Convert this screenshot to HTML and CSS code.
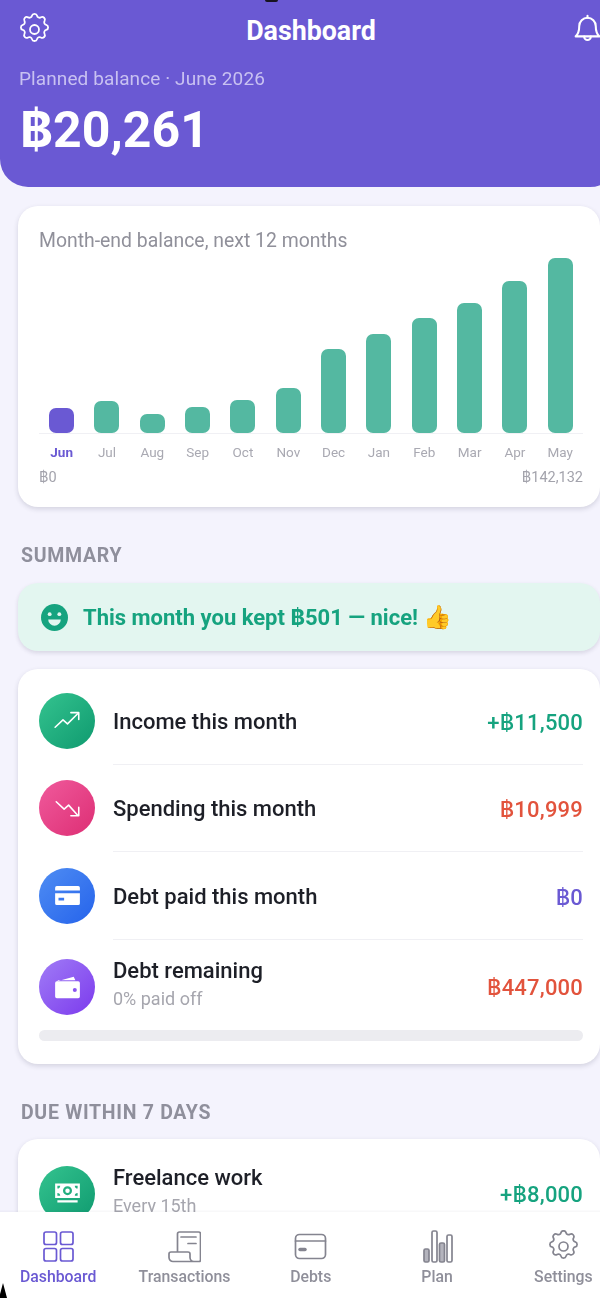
FILE: index.html
```html
<!DOCTYPE html>
<html lang="en">
<head>
<meta charset="utf-8">
<title>Dashboard</title>
<link rel="stylesheet" href="styles.css">
</head>
<body>
<div class="app">
  <span class="cam"></span>
  <header class="hero">
    <div class="topbar">
      <svg class="top-icon gear-icon" viewBox="1 1 22 22"><use href="#gear"/></svg>
      <h1 class="title">Dashboard</h1>
      <svg class="top-icon" viewBox="0 0 24 24"><path d="M6 9.5a6 6 0 0 1 12 0c0 5 1.6 6.6 2.6 7.5H3.4C4.400 16.100 6 14.500 6 9.500Z"/><path d="M9.600 17.200a2.400 2.400 0 0 0 4.800 0"/><path d="M12 2v1.500"/></svg>
    </div>
    <p class="hero-label">Planned balance · June 2026</p>
    <p class="hero-value">฿20,261</p>
  </header>

  <main class="content">
    <section class="card chart-card">
      <p class="chart-title">Month-end balance, next 12 months</p>
      <div class="bars">
        <div class="bar-col"><i class="bar bar-now" style="height:25px"></i></div>
        <div class="bar-col"><i class="bar" style="height:32px"></i></div>
        <div class="bar-col"><i class="bar" style="height:19px"></i></div>
        <div class="bar-col"><i class="bar" style="height:26px"></i></div>
        <div class="bar-col"><i class="bar" style="height:33px"></i></div>
        <div class="bar-col"><i class="bar" style="height:45px"></i></div>
        <div class="bar-col"><i class="bar" style="height:84px"></i></div>
        <div class="bar-col"><i class="bar" style="height:99px"></i></div>
        <div class="bar-col"><i class="bar" style="height:115px"></i></div>
        <div class="bar-col"><i class="bar" style="height:130px"></i></div>
        <div class="bar-col"><i class="bar" style="height:152px"></i></div>
        <div class="bar-col"><i class="bar" style="height:175px"></i></div>
      </div>
      <div class="months">
        <span class="month-now">Jun</span><span>Jul</span><span>Aug</span><span>Sep</span><span>Oct</span><span>Nov</span><span>Dec</span><span>Jan</span><span>Feb</span><span>Mar</span><span>Apr</span><span>May</span>
      </div>
      <div class="scale"><span>฿0</span><span>฿142,132</span></div>
    </section>

    <h2 class="section-label">SUMMARY</h2>

    <div class="banner">
      <svg class="smile" viewBox="0 0 28 28"><circle cx="14" cy="14" r="14" fill="#16a37f"/><circle cx="9" cy="10.500" r="2" fill="#e3f6f0"/><circle cx="19" cy="10.500" r="2" fill="#e3f6f0"/><path d="M7.500 16h13a6.500 6.500 0 0 1-13 0Z" fill="#e3f6f0"/></svg>
      <span class="banner-text">This month you kept ฿501 — nice! <span class="emoji">👍</span></span>
    </div>

    <section class="card list-card">
      <div class="row">
        <span class="badge badge-green"><svg viewBox="0 0 24 24"><path d="M1 18l7-6.500 4 3.500 9-9"/><path d="M15 5h7v6"/></svg></span>
        <div class="row-body"><div class="row-text"><span class="row-name">Income this month</span></div><span class="amount green">+฿11,500</span></div>
      </div>
      <div class="row">
        <span class="badge badge-pink"><svg viewBox="0 0 24 24"><path d="M2 6l7 6.500 4-3.500 8 9"/><path d="M22 11v7.500h-7"/></svg></span>
        <div class="row-body"><div class="row-text"><span class="row-name">Spending this month</span></div><span class="amount red">฿10,999</span></div>
      </div>
      <div class="row">
        <span class="badge badge-blue"><svg viewBox="0 0 24 24"><path class="solid" fill-rule="evenodd" d="M2.500 3.500h19a1.500 1.500 0 0 1 1.500 1.500v2.500H1V5a1.500 1.500 0 0 1 1.500-1.500ZM1 10h22v9a1.500 1.500 0 0 1-1.500 1.500h-19A1.500 1.500 0 0 1 1 19Zm3 4v2.500h5V14Z"/></svg></span>
        <div class="row-body"><div class="row-text"><span class="row-name">Debt paid this month</span></div><span class="amount purple">฿0</span></div>
      </div>
      <div class="row row-debt">
        <span class="badge badge-violet"><svg viewBox="0 0 24 24"><path class="solid" fill-rule="evenodd" d="M3 6.500 17.500 2.500 19 5.500H3.500ZM2.500 6.500h19A1.500 1.500 0 0 1 23 8v12a1.500 1.500 0 0 1-1.500 1.500h-19A1.500 1.500 0 0 1 1 20V8a1.500 1.500 0 0 1 1.500-1.500ZM18.500 12.500a1.800 1.800 0 1 0 0 3.600 1.800 1.800 0 0 0 0-3.600Z"/></svg></span>
        <div class="row-body row-last"><div class="row-text row-text-two"><span class="row-name">Debt remaining</span><span class="row-sub">0% paid off</span></div><span class="amount red">฿447,000</span></div>
      </div>
      <div class="track"></div>
    </section>

    <h2 class="section-label">DUE WITHIN 7 DAYS</h2>

    <section class="card list-card due-card">
      <div class="row row-due">
        <span class="badge badge-green"><svg viewBox="0 0 24 24"><path class="solid" fill-rule="evenodd" d="M1 3h22v13H1ZM12 5.500a4 4 0 1 0 0 8 4 4 0 0 0 0-8ZM12 7.500a2 2 0 1 1 0 4 2 2 0 0 1 0-4ZM3 5v2.500A2.500 2.500 0 0 0 5.500 5ZM18.500 5A2.500 2.500 0 0 0 21 7.500V5ZM3 14h2.500A2.500 2.500 0 0 0 3 11.500ZM21 14v-2.500A2.500 2.500 0 0 0 18.500 14ZM3 18h18v2H3Z"/></svg></span>
        <div class="row-body row-last"><div class="row-text row-text-two"><span class="row-name">Freelance work</span><span class="row-sub">Every 15th</span></div><span class="amount green">+฿8,000</span></div>
      </div>
    </section>
  </main>

  <nav class="nav">
    <a class="nav-item nav-active">
      <svg viewBox="0 0 33 33"><rect x="2" y="2" width="12.500" height="12.500" rx="2"/><rect x="18.500" y="2" width="12.500" height="12.500" rx="2"/><rect x="2" y="18.500" width="12.500" height="12.500" rx="2"/><rect x="18.500" y="18.500" width="12.500" height="12.500" rx="2"/></svg>
      <span>Dashboard</span>
    </a>
    <a class="nav-item">
      <svg viewBox="0 0 33 33"><path d="M9.500 22V4a2 2 0 0 1 2-2h19a2 2 0 0 1 2 2v26a1.500 1.500 0 0 1-1.500 1.500H5a4 4 0 0 1-4-4V24a2 2 0 0 1 2-2h17a2 2 0 0 1 2 2v3.500a4 4 0 0 0 4 4"/><path d="M13 7h15M20 13.500h8"/></svg>
      <span>Transactions</span>
    </a>
    <a class="nav-item">
      <svg viewBox="0 0 33 33"><rect x="1.500" y="4.500" width="30" height="24" rx="4"/><path d="M1.500 11h30"/><path class="fat" d="M6 19.500h5"/></svg>
      <span>Debts</span>
    </a>
    <a class="nav-item">
      <svg viewBox="0 0 33 33"><rect class="bar-fill" x="3" y="19" width="5" height="13" rx="1.500"/><rect x="11" y="1" width="5" height="31" rx="1.500"/><rect class="bar-fill" x="18.500" y="13" width="5" height="19" rx="1.500"/><rect x="26" y="5" width="5" height="27" rx="1.500"/></svg>
      <span>Plan</span>
    </a>
    <a class="nav-item">
      <svg class="gear-icon" viewBox="1 1 22 22"><use href="#gear"/></svg>
      <span>Settings</span>
    </a>
  </nav>
  <span class="corner"></span>
</div>

<svg class="defs" width="0" height="0">
  <defs>
    <g id="gear">
      <path d="M10.300 2.800c.4-1.700 3-1.700 3.400 0a1.750 1.750 0 0 0 2.600 1.100c1.500-.9 3.300.8 2.400 2.400a1.750 1.750 0 0 0 1.100 2.600c1.700.4 1.700 3 0 3.400a1.750 1.750 0 0 0-1.100 2.600c.9 1.500-.8 3.300-2.400 2.400a1.750 1.750 0 0 0-2.600 1.100c-.4 1.700-3 1.700-3.400 0a1.750 1.750 0 0 0-2.600-1.100c-1.500.9-3.300-.8-2.400-2.400a1.750 1.750 0 0 0-1.100-2.600c-1.700-.4-1.700-3 0-3.400a1.750 1.750 0 0 0 1.100-2.600c-.9-1.500.8-3.300 2.400-2.400a1.750 1.750 0 0 0 2.600-1.100Z"/>
      <circle cx="12" cy="12" r="3"/>
    </g>
  </defs>
</svg>
</body>
</html>
```

FILE: styles.css
```css
* { box-sizing: border-box; }
html, body { margin: 0; height: 100%; overflow: hidden; background: #f4f3fd; }
body { font-family: Roboto, Inter, "Noto Sans", sans-serif; }
.app { position: relative; width: 600px; height: 1298px; overflow: hidden; filter: blur(.45px); }
.defs { position: absolute; }
.cam { position: absolute; left: 265px; top: 0; width: 13px; height: 2px; background: #17131f; border-radius: 0 0 4px 4px; z-index: 3; }
.corner { position: absolute; left: -1px; bottom: 0; width: 0; height: 0; border-left: 4px solid transparent; border-right: 4px solid transparent; border-bottom: 15px solid #000; z-index: 3; }

.hero { width: 618px; height: 187px; background: #6a59d3; border-radius: 0 0 28px 28px; padding: 10px 14px 0 18px; color: #fff; }
.topbar { display: flex; align-items: center; justify-content: space-between; height: 38px; }
.top-icon { width: 33px; height: 33px; fill: none; stroke: #fff; stroke-width: 1.500; stroke-linecap: round; stroke-linejoin: round; overflow: visible; }
.top-icon.gear-icon { stroke-width: 1.200; }
.title { margin: 0; padding-top: 4px; font-size: 26.800px; font-weight: 700; line-height: 38px; }
.hero-label { margin: 19px 0 0 1px; font-size: 19px; line-height: 24px; color: #c8c1f1; letter-spacing: .1px; }
.hero-value { margin: 11px 0 0 2px; font-size: 50px; line-height: 56px; font-weight: 700; }

.content { width: 618px; padding: 19px 18px 0; }
.card { background: #fff; border-radius: 20px; box-shadow: 0 2px 5px rgba(40, 36, 70, .16); }
.chart-card { width: 582px; height: 301px; padding: 23px 17px 0 21px; }
.chart-title { margin: 0; font-size: 19.400px; line-height: 24px; color: #90909a; }
.bars { display: flex; height: 178px; margin-top: 3px; align-items: flex-end; border-bottom: 1px solid #f0f0f4; }
.bar-col { flex: 1; display: flex; justify-content: center; }
.bar { display: block; width: 25px; background: #54b8a1; border-radius: 7px; }
.bar-now { background: #6a59d3; }
.months { display: flex; margin-top: 9px; font-size: 13.500px; line-height: 18px; color: #a9a9b2; }
.months span { flex: 1; text-align: center; }
.months .month-now { color: #6a59d3; font-weight: 700; }
.scale { display: flex; justify-content: space-between; margin-top: 8px; font-size: 14.500px; line-height: 18px; color: #a3a3ac; }

.section-label { margin: 37px 0 0 3px; font-size: 19.500px; line-height: 24px; font-weight: 700; color: #8f8f9c; letter-spacing: .7px; }

.banner { display: flex; align-items: center; gap: 15px; width: 582px; height: 68px; margin-top: 15px; padding-left: 23px; background: #e3f6f0; border-radius: 20px; box-shadow: 0 2px 4px rgba(40, 36, 70, .14); }
.smile { width: 27px; height: 29px; flex: none; }
.banner-text { font-size: 22px; font-weight: 700; color: #16a37f; }
.emoji { font-size: 23px; }

.list-card { margin-top: 18px; width: 582px; padding: 8px 17px 23px 21px; }
.due-card { margin-top: 14px; height: 300px; }
.row { display: flex; align-items: stretch; gap: 18px; height: 87.500px; }
.row-debt { height: 90px; padding-top: 5px; }
.row-due { height: 94px; }
.badge { flex: none; align-self: center; width: 56px; height: 56px; border-radius: 50%; display: flex; align-items: center; justify-content: center; }
.badge svg { width: 27px; height: 27px; fill: none; stroke: #fff; stroke-width: 1.400; stroke-linecap: round; stroke-linejoin: round; }
.badge .solid { fill: #fff; stroke: none; }
.badge-green { background: linear-gradient(135deg, #34c38f, #0f9a6f); }
.badge-pink { background: linear-gradient(135deg, #f05a9c, #dd2e74); }
.badge-blue { background: linear-gradient(135deg, #4f8df3, #2563eb); }
.badge-violet { background: linear-gradient(135deg, #a07cf6, #7c3aed); }
.row-body { flex: 1; min-width: 0; display: flex; align-items: center; justify-content: space-between; padding-top: 3px; border-bottom: 1px solid #f0f0f4; }
.row-last { padding-top: 0; border-bottom: 0; }
.row-text { display: flex; flex-direction: column; }
.row-text-two { padding-bottom: 4px; }
.row-name { font-size: 22px; line-height: 28px; font-weight: 500; color: #1d1f27; }
.row-sub { font-size: 18px; line-height: 28px; color: #a6a6ae; }
.amount { font-size: 22px; font-weight: 500; letter-spacing: .2px; }
.green { color: #16a37f; }
.red { color: #e2533c; }
.purple { color: #6a59d3; }
.track { height: 11px; border-radius: 6px; background: #ececf0; }

.nav { position: absolute; left: -5px; bottom: 0; height: 86px; width: 640px; background: #fff; display: grid; grid-template-columns: repeat(5, 126.300px); padding-top: 18px; box-shadow: 0 -1px 2px rgba(40, 36, 70, .05); }
.nav-item { display: flex; flex-direction: column; align-items: center; font-size: 15.800px; line-height: 20px; font-weight: 500; color: #8f8f9a; }
.nav-item svg { width: 33px; height: 33px; fill: none; stroke: #84848f; stroke-width: 1.700; stroke-linecap: round; stroke-linejoin: round; margin-bottom: 4px; }
.nav-item .gear-icon { stroke-width: 1.150; }
.nav-item .fat { stroke-width: 3.500; }
.nav-item .bar-fill { fill: #b4b4bd; }
.nav-active { color: #6a59d3; }
.nav-active svg { stroke: #6a59d3; }
```
